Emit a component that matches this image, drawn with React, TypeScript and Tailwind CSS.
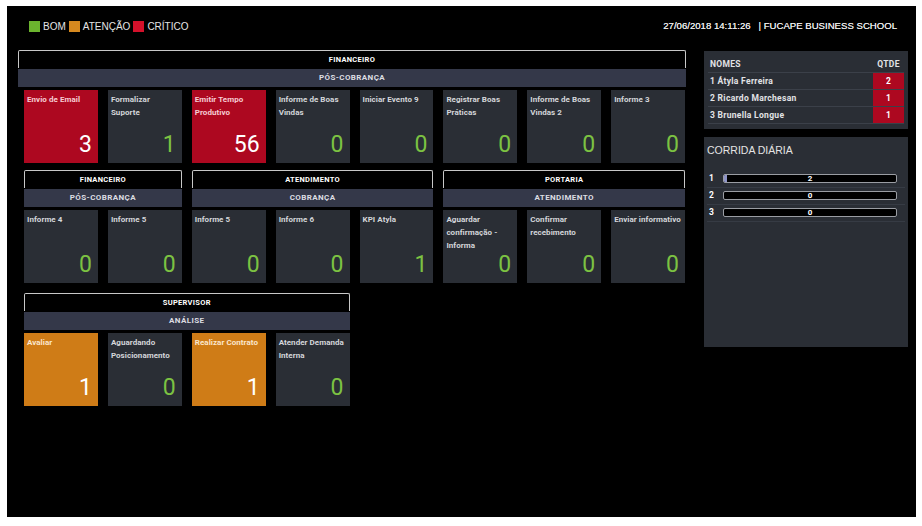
import React from 'react';

type Tone = 'ok' | 'warn' | 'crit';

type Kpi = { title: string; value: number; tone: Tone };

const toneBg: Record<Tone, string> = {
  ok: 'bg-[#2a2e35] text-[#d4d6da]',
  warn: 'bg-[#cf7c17] text-[#fbe6cc]',
  crit: 'bg-[#ad0820] text-[#f6cdd3]',
};

const toneNum: Record<Tone, string> = {
  ok: 'text-[#7cc242]',
  warn: 'text-white',
  crit: 'text-white',
};

function KpiCard({ kpi }: { kpi: Kpi }) {
  return (
    <div className={`flex h-[73px] flex-col justify-between pt-[3px] pr-[1px] pb-[7px] pl-[3px] ${toneBg[kpi.tone]}`}>
      <p className="text-[8px] leading-[13px] font-bold tracking-[0.05px]">{kpi.title}</p>
      <p className={`pr-[5px] text-right text-[23px] leading-none font-normal ${toneNum[kpi.tone]}`}>{kpi.value}</p>
    </div>
  );
}

function SectionHead({ area, step }: { area: string; step: string }) {
  return (
    <>
      <div className="flex h-[18px] items-center justify-center rounded-t-[2px] border-x border-t border-[#c8c8c8] bg-black text-[7.5px] font-bold tracking-[0.3px] text-white">
        {area}
      </div>
      <div className="mt-[1px] flex h-[18px] items-center justify-center bg-[#343849] text-[8px] font-bold tracking-[0.4px] text-[#dcdde2]">
        {step}
      </div>
    </>
  );
}

const rowOne: Kpi[] = [
  { title: 'Envio de Email', value: 3, tone: 'crit' },
  { title: 'Formalizar Suporte', value: 1, tone: 'ok' },
  { title: 'Emitir Tempo Produtivo', value: 56, tone: 'crit' },
  { title: 'Informe de Boas Vindas', value: 0, tone: 'ok' },
  { title: 'Iniciar Evento 9', value: 0, tone: 'ok' },
  { title: 'Registrar Boas Práticas', value: 0, tone: 'ok' },
  { title: 'Informe de Boas Vindas 2', value: 0, tone: 'ok' },
  { title: 'Informe 3', value: 0, tone: 'ok' },
];

const ranking = [
  { pos: 1, name: 'Átyla Ferreira', qtd: 2 },
  { pos: 2, name: 'Ricardo Marchesan', qtd: 1 },
  { pos: 3, name: 'Brunella Longue', qtd: 1 },
];

const corrida = [
  { pos: 1, value: 2, pct: 2 },
  { pos: 2, value: 0, pct: 0 },
  { pos: 3, value: 0, pct: 0 },
];

export default function App() {
  return (
    <div
      className="flex h-[526px] w-[922px] flex-col bg-white pt-[6px] pr-[6px] pb-[9px] pl-[7px]"
      style={{ fontFamily: 'Roboto, "Liberation Sans", Arial, sans-serif' }}
    >
      <div className="flex flex-1 flex-col bg-black">
        {/* top bar */}
        <div
          className="mt-[13px] flex h-[15px] items-center justify-between pr-[19px] pl-[22px] text-[10px] text-[#e4e4e4]"
          style={{ fontFamily: '"Liberation Sans", Arial, sans-serif' }}
        >
          <div className="flex items-center">
            <span className="mr-[3px] h-[11px] w-[11px] bg-[#6bb42e]" />
            <span className="mr-[3px]">BOM</span>
            <span className="mr-[3px] h-[11px] w-[11px] bg-[#d6891f]" />
            <span className="mr-[3px]">ATENÇÃO</span>
            <span className="mr-[3px] h-[11px] w-[11px] bg-[#d4112b]" />
            <span>CRÍTICO</span>
          </div>
          <div className="text-[9.6px] text-[#e8e8e8] [text-shadow:0_0_0.4px_#e8e8e8]">
            27/06/2018 14:11:26&nbsp;&nbsp; | FUCAPE BUSINESS SCHOOL
          </div>
        </div>

        <div className="mt-[16px] flex pr-[8px] pl-[11px]">
          {/* left column */}
          <div className="flex w-[668px] flex-col">
            <SectionHead area="FINANCEIRO" step="PÓS-COBRANÇA" />
            <div className="mt-[3px] grid grid-cols-8 gap-x-[10px] pr-[1px] pl-[6px]">
              {rowOne.map((k) => (
                <KpiCard key={k.title} kpi={k} />
              ))}
            </div>

            <div className="mt-[7px] grid grid-cols-8 gap-x-[10px] pr-[1px] pl-[6px]">
              <div className="col-span-2 flex flex-col">
                <SectionHead area="FINANCEIRO" step="PÓS-COBRANÇA" />
                <div className="mt-[3px] grid grid-cols-2 gap-x-[10px]">
                  <KpiCard kpi={{ title: 'Informe 4', value: 0, tone: 'ok' }} />
                  <KpiCard kpi={{ title: 'Informe 5', value: 0, tone: 'ok' }} />
                </div>
              </div>
              <div className="col-span-3 flex flex-col">
                <SectionHead area="ATENDIMENTO" step="COBRANÇA" />
                <div className="mt-[3px] grid grid-cols-3 gap-x-[10px]">
                  <KpiCard kpi={{ title: 'Informe 5', value: 0, tone: 'ok' }} />
                  <KpiCard kpi={{ title: 'Informe 6', value: 0, tone: 'ok' }} />
                  <KpiCard kpi={{ title: 'KPI Atyla', value: 1, tone: 'ok' }} />
                </div>
              </div>
              <div className="col-span-3 flex flex-col">
                <SectionHead area="PORTARIA" step="ATENDIMENTO" />
                <div className="mt-[3px] grid grid-cols-3 gap-x-[10px]">
                  <KpiCard kpi={{ title: 'Aguardar confirmação - Informa', value: 0, tone: 'ok' }} />
                  <KpiCard kpi={{ title: 'Confirmar recebimento', value: 0, tone: 'ok' }} />
                  <KpiCard kpi={{ title: 'Enviar informativo', value: 0, tone: 'ok' }} />
                </div>
              </div>
            </div>

            <div className="mt-[10px] grid grid-cols-8 gap-x-[10px] pr-[1px] pl-[6px]">
              <div className="col-span-4 flex flex-col">
                <SectionHead area="SUPERVISOR" step="ANÁLISE" />
                <div className="mt-[3px] grid grid-cols-4 gap-x-[10px]">
                  <KpiCard kpi={{ title: 'Avaliar', value: 1, tone: 'warn' }} />
                  <KpiCard kpi={{ title: 'Aguardando Posicionamento', value: 0, tone: 'ok' }} />
                  <KpiCard kpi={{ title: 'Realizar Contrato', value: 1, tone: 'warn' }} />
                  <KpiCard kpi={{ title: 'Atender Demanda Interna', value: 0, tone: 'ok' }} />
                </div>
              </div>
            </div>
          </div>

          {/* right column */}
          <div className="ml-[18px] flex w-[204px] flex-col">
            <div className="mt-[1px] bg-[#2a2e35] px-[4px] pt-[5px] pb-[5px] text-[8.5px] font-bold tracking-[0.3px] text-[#e2e3e6]">
              <div className="flex h-[17px] items-center justify-between border-b border-[#3b4049] pl-[2px]">
                <span>NOMES</span>
                <span className="w-[31px] text-center">QTDE</span>
              </div>
              {ranking.map((r) => (
                <div key={r.pos} className="flex h-[17px] items-stretch justify-between border-b border-[#3b4049]">
                  <span className="flex items-center pl-[2px]">
                    {r.pos} {r.name}
                  </span>
                  <span className="flex w-[31px] items-center justify-center bg-[#ad0820] text-white">{r.qtd}</span>
                </div>
              ))}
            </div>

            <div className="mt-[8px] h-[210px] bg-[#2a2e35] px-[3px] pt-[6px]">
              <p
                className="text-[10.5px] text-[#e4e4e4]"
                style={{ fontFamily: '"Liberation Sans", Arial, sans-serif' }}
              >
                CORRIDA DIÁRIA
              </p>
              <div className="mt-[12px]">
                {corrida.map((c) => (
                  <div key={c.pos} className="flex h-[17px] items-center border-b border-[#363b44]">
                    <span className="w-[16px] pl-[2px] text-[8.5px] font-bold text-white">{c.pos}</span>
                    <div className="relative h-[9px] w-[174px] overflow-hidden rounded-[2px] border border-[#9a9da3] bg-black">
                      <div className="absolute top-0 bottom-0 left-0 bg-[#8d93c6]" style={{ width: `${c.pct}%` }} />
                      <span className="absolute inset-0 flex items-center justify-center text-[8px] leading-none font-bold text-white">
                        {c.value}
                      </span>
                    </div>
                  </div>
                ))}
              </div>
            </div>
          </div>
        </div>
      </div>
    </div>
  );
}
